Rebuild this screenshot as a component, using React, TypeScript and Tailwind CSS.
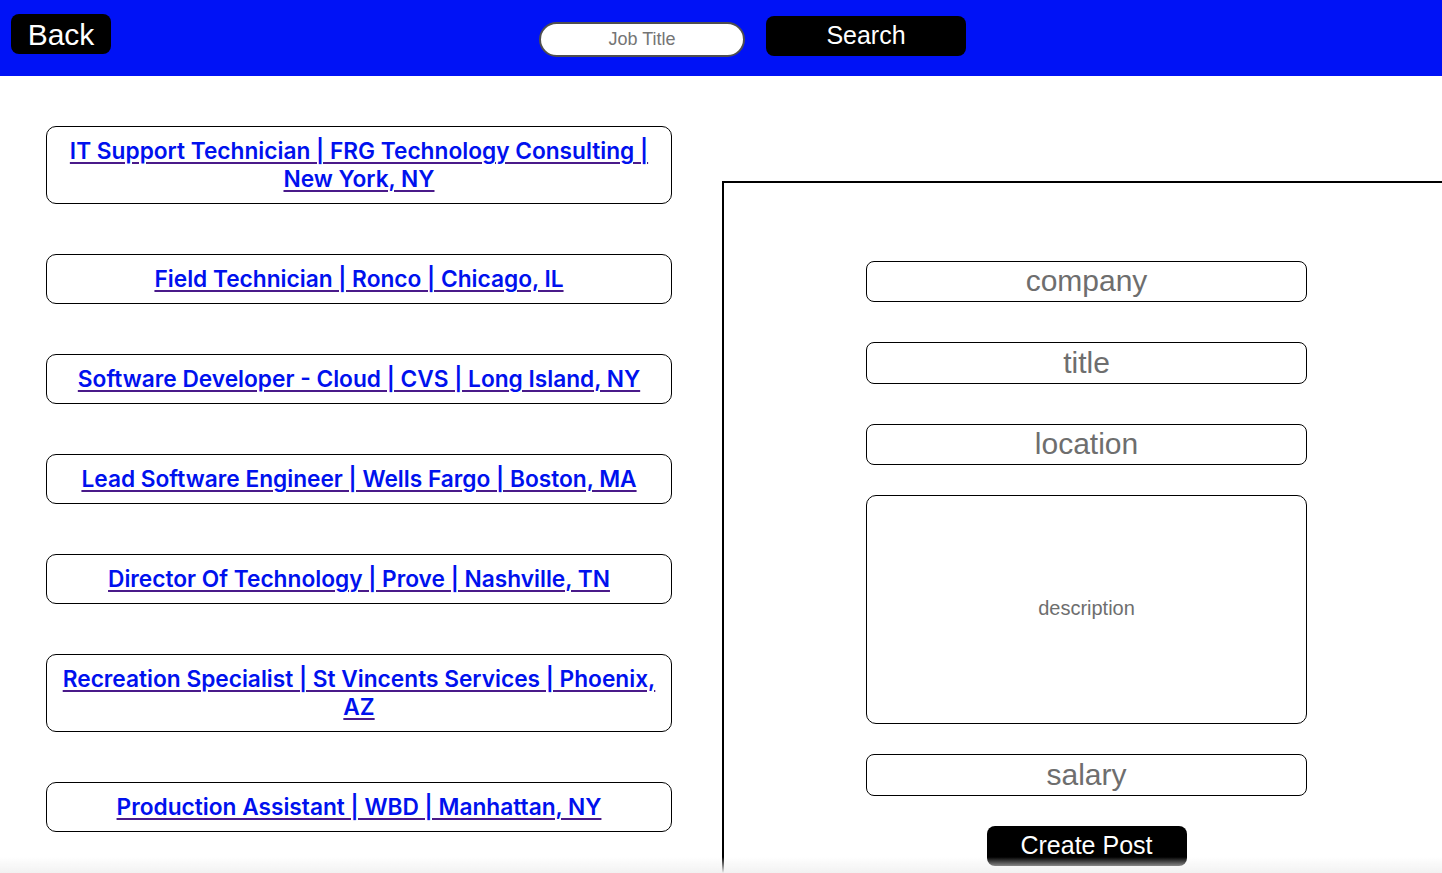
import React from 'react';

const jobs = [
  'IT Support Technician | FRG Technology Consulting | New York, NY',
  'Field Technician | Ronco | Chicago, IL',
  'Software Developer - Cloud | CVS | Long Island, NY',
  'Lead Software Engineer | Wells Fargo | Boston, MA',
  'Director Of Technology | Prove | Nashville, TN',
  'Recreation Specialist | St Vincents Services | Phoenix, AZ',
  'Production Assistant | WBD | Manhattan, NY',
];

const sans = "font-['Liberation_Sans',Arial,sans-serif]";

export default function App() {
  return (
    <div className={`min-h-screen bg-white ${sans}`}>
      <header className="flex h-[76px] items-start bg-[#0012f6]">
        <button className="ml-[11px] mt-[14px] flex h-[40px] w-[100px] items-center justify-center rounded-[8px] bg-black text-[30px] text-white">
          Back
        </button>
        <input
          placeholder="Job Title"
          className="ml-[428px] mt-[22px] h-[35px] w-[206px] rounded-full border-2 border-[#4f4f4f] bg-white pb-[1px] text-center text-[18px] outline-none placeholder:text-[#757575]"
        />
        <button className="ml-[21px] mt-[16px] flex h-[40px] w-[200px] items-center justify-center rounded-[8px] bg-black text-[25px] text-white">
          Search
        </button>
      </header>

      <div className="flex">
        <div className="flex w-[722px] shrink-0 flex-col gap-[50px] pl-[46px] pr-[50px] pt-[50px]">
          {jobs.map((job) => (
            <div
              key={job}
              className="rounded-[10px] border border-black px-[10px] py-[10px] text-center font-['Inter',sans-serif] text-[22.7px] font-semibold leading-[28px]"
            >
              <a
                href="#"
                className="text-[#0011ee] underline decoration-[#4a1a8a] decoration-2 underline-offset-[3px]"
              >
                {job}
              </a>
            </div>
          ))}
        </div>

        <div className="mt-[105px] min-h-[800px] flex-1 border-l-2 border-t-2 border-black pl-[142px] pt-[78px]">
          <div className="flex w-[441px] flex-col items-center">
            <input
              placeholder="company"
              className="mb-[40px] h-[41px] w-full rounded-[8px] border border-black pb-[2px] text-center text-[30px] outline-none placeholder:text-[#6e6e6e]"
            />
            <input
              placeholder="title"
              className="mb-[40px] h-[42px] w-full rounded-[8px] border border-black pb-[2px] text-center text-[30px] outline-none placeholder:text-[#6e6e6e]"
            />
            <input
              placeholder="location"
              className="mb-[30px] h-[41px] w-full rounded-[8px] border border-black pb-[2px] text-center text-[30px] outline-none placeholder:text-[#6e6e6e]"
            />
            <input
              placeholder="description"
              className="mb-[30px] h-[229px] w-full rounded-[10px] border border-black pb-[2px] text-center text-[20px] outline-none placeholder:text-[#6e6e6e]"
            />
            <input
              placeholder="salary"
              className="mb-[30px] h-[42px] w-full rounded-[8px] border border-black pb-[2px] text-center text-[30px] outline-none placeholder:text-[#6e6e6e]"
            />
            <button className="flex h-[40px] w-[200px] items-center justify-center rounded-[8px] bg-black text-[25px] text-white">
              Create Post
            </button>
          </div>
        </div>
      </div>

      <div className="pointer-events-none fixed bottom-0 left-0 h-[16px] w-full bg-gradient-to-b from-transparent to-[#f1f1f1]" />
    </div>
  );
}
